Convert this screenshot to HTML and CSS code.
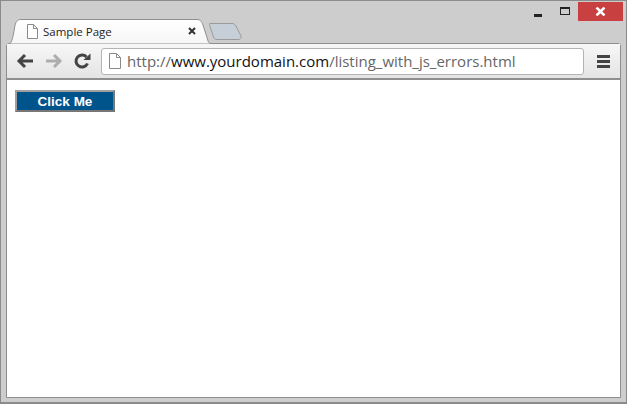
FILE: index.html
```html
<!DOCTYPE html>
<html lang="en">
<head>
    <meta charset="UTF-8">
    <title>Sample Page</title>
    <link rel="stylesheet" href="styles.css">
</head>
<body>
    <div class="window">
        <!-- title bar -->
        <div class="titlebar">
            <div class="tab">
                <svg class="tab-shape" width="204" height="25" viewBox="0 0 204 25">
                    <path d="M0.500 25 C3 23 4 18 5.500 9 C6.500 3 8 0.500 12 0.500 L188 0.500 C191 0.500 192.500 2 194 6 L198.500 20 C199 23 200 24.500 203 25 Z" fill="url(#tabFill)" stroke="#8e8e8e"/>
                    <defs>
                        <linearGradient id="tabFill" x1="0" y1="0" x2="0" y2="1">
                            <stop offset="0" stop-color="#ffffff"/>
                            <stop offset="1" stop-color="#f6f6f6"/>
                        </linearGradient>
                    </defs>
                </svg>
                <svg class="page-icon" width="12" height="15" viewBox="0 0 12 15">
                    <path d="M1.500 0.500 H7.500 L11.500 4.500 V14.500 H1.500 Z M7.500 0.500 V4.500 H11.500" fill="#fff" stroke="#8a8a8a"/>
                </svg>
                <span class="tab-title">Sample Page</span>
                <svg class="tab-close" width="8" height="8" viewBox="0 0 8 8">
                    <path d="M1 1 L7 7 M7 1 L1 7" stroke="#333" stroke-width="2"/>
                </svg>
            </div>
            <svg class="new-tab" width="33" height="17" viewBox="0 0 33 17">
                <path d="M1 0.500 H23 C25 0.500 26 1.500 27 3 L32 13 C32.500 15 31.500 16.500 29 16.500 H8 C6 16.500 5 15.500 4.500 14 L0.500 2 C0.300 1 0.500 0.500 1 0.500 Z" fill="#c6ced8" stroke="#9a9a9a"/>
            </svg>
            <div class="window-controls">
                <div class="win-btn"><span class="minimize"></span></div>
                <div class="win-btn"><span class="maximize"></span></div>
                <div class="win-btn close">
                    <svg width="11" height="9" viewBox="0 0 11 9">
                        <path d="M1.500 0.500 L9.500 8.500 M9.500 0.500 L1.500 8.500" stroke="#fff" stroke-width="2.500"/>
                    </svg>
                </div>
            </div>
        </div>

        <div class="browser">
            <!-- toolbar -->
            <div class="toolbar">
                <svg class="nav-icon" width="18" height="16" viewBox="0 0 18 16">
                    <path d="M17 8 H4 M9 2 L3 8 L9 14" fill="none" stroke="#444" stroke-width="3"/>
                </svg>
                <svg class="nav-icon" width="18" height="16" viewBox="0 0 18 16">
                    <path d="M1 8 H14 M9 2 L15 8 L9 14" fill="none" stroke="#adadad" stroke-width="3"/>
                </svg>
                <svg class="nav-icon" width="17" height="17" viewBox="0 0 17 17">
                    <path d="M13.500 10.500 A6 6 0 1 1 12.500 4" fill="none" stroke="#444" stroke-width="3"/>
                    <path d="M9.500 7 H16.500 V0.500 Z" fill="#444"/>
                </svg>
                <div class="address">
                    <svg width="12" height="16" viewBox="0 0 12 16">
                        <path d="M0.500 0.500 H7.500 L11.500 4.500 V15.500 H0.500 Z M7.500 0.500 V4.500 H11.500" fill="#fff" stroke="#8a8a8a"/>
                    </svg>
                    <span class="url"><span class="url-dim">http://</span>www.yourdomain.com<span class="url-dim">/listing_with_js_errors.html</span></span>
                </div>
                <div class="menu">
                    <span></span><span></span><span></span>
                </div>
            </div>

            <!-- page -->
            <div class="content">
                <button class="click-btn">Click Me</button>
            </div>
        </div>
    </div>
</body>
</html>
```

FILE: styles.css
```css
* {
    box-sizing: border-box;
}

html, body {
    margin: 0;
    height: 100%;
}

body {
    font-family: "Open Sans", "Liberation Sans", sans-serif;
    overflow: hidden;
}

.window {
    width: 627px;
    height: 404px;
    display: flex;
    flex-direction: column;
    padding: 1px 5px 4px 5px;
    background-color: #cdcdcd;
    border: 1px solid #8b8b8b;
    border-bottom-width: 2px;
}

/* title bar */
.titlebar {
    height: 41px;
    flex-shrink: 0;
    display: flex;
    align-items: flex-end;
    padding-left: 3px;
}

.tab {
    position: relative;
    z-index: 1;
    width: 200px;
    height: 24px;
    display: flex;
    align-items: center;
    padding: 0 0 0 17px;
}

.tab-shape {
    position: absolute;
    left: 0;
    top: 0;
}

.page-icon {
    position: relative;
    flex-shrink: 0;
    margin-right: 5px;
}

.tab-title {
    position: relative;
    font-size: 11.5px;
    color: #222;
    width: 145px;
}

.tab-close {
    position: relative;
}

.new-tab {
    margin: 0 0 3px 0;
}

.window-controls {
    display: flex;
    align-self: flex-start;
    margin-left: auto;
    margin-right: -2px;
}

.win-btn {
    width: 28px;
    height: 19px;
    display: flex;
    align-items: center;
    justify-content: center;
}

.win-btn.close {
    width: 45px;
    background-color: #c94040;
}

.minimize {
    width: 8px;
    height: 3px;
    margin: 7px 0 0 3px;
    background-color: #222;
}

.maximize {
    width: 10px;
    height: 8px;
    margin: -2px 0 0 2px;
    border: 1px solid #222;
    border-top-width: 2px;
}

/* browser area */
.browser {
    flex: 1;
    display: flex;
    flex-direction: column;
    border: 1px solid #8e8e8e;
    border-radius: 3px 3px 0 0;
    background-color: #fff;
}

.toolbar {
    height: 36px;
    flex-shrink: 0;
    display: flex;
    align-items: center;
    padding: 0 10px 0 9px;
    background: linear-gradient(#f7f7f7, #e4e4e4);
    border-bottom: 2px solid #8f8f8f;
}

.nav-icon {
    margin-right: 11px;
    flex-shrink: 0;
}

.address {
    width: 483px;
    height: 27px;
    margin-left: -1px;
    display: flex;
    align-items: center;
    gap: 6px;
    padding-left: 7px;
    background-color: #fff;
    border: 1px solid #b4b4b4;
    border-radius: 3px;
}

.url {
    font-size: 15px;
    color: #111;
    white-space: nowrap;
}

.url-dim {
    color: #666;
}

.menu {
    margin-left: auto;
    display: flex;
    flex-direction: column;
    gap: 2px;
}

.menu span {
    width: 13px;
    height: 3px;
    background-color: #444;
}

.content {
    flex: 1;
    padding: 10px 8px;
}

.click-btn {
    display: block;
    width: 100px;
    height: 22px;
    padding: 0;
    font-family: "Liberation Sans", Arial, sans-serif;
    font-size: 13.5px;
    font-weight: bold;
    color: #fff;
    background-color: #00548c;
    border: 2px solid;
    border-color: #a0a0a0 #777 #777 #a0a0a0;
}
```
